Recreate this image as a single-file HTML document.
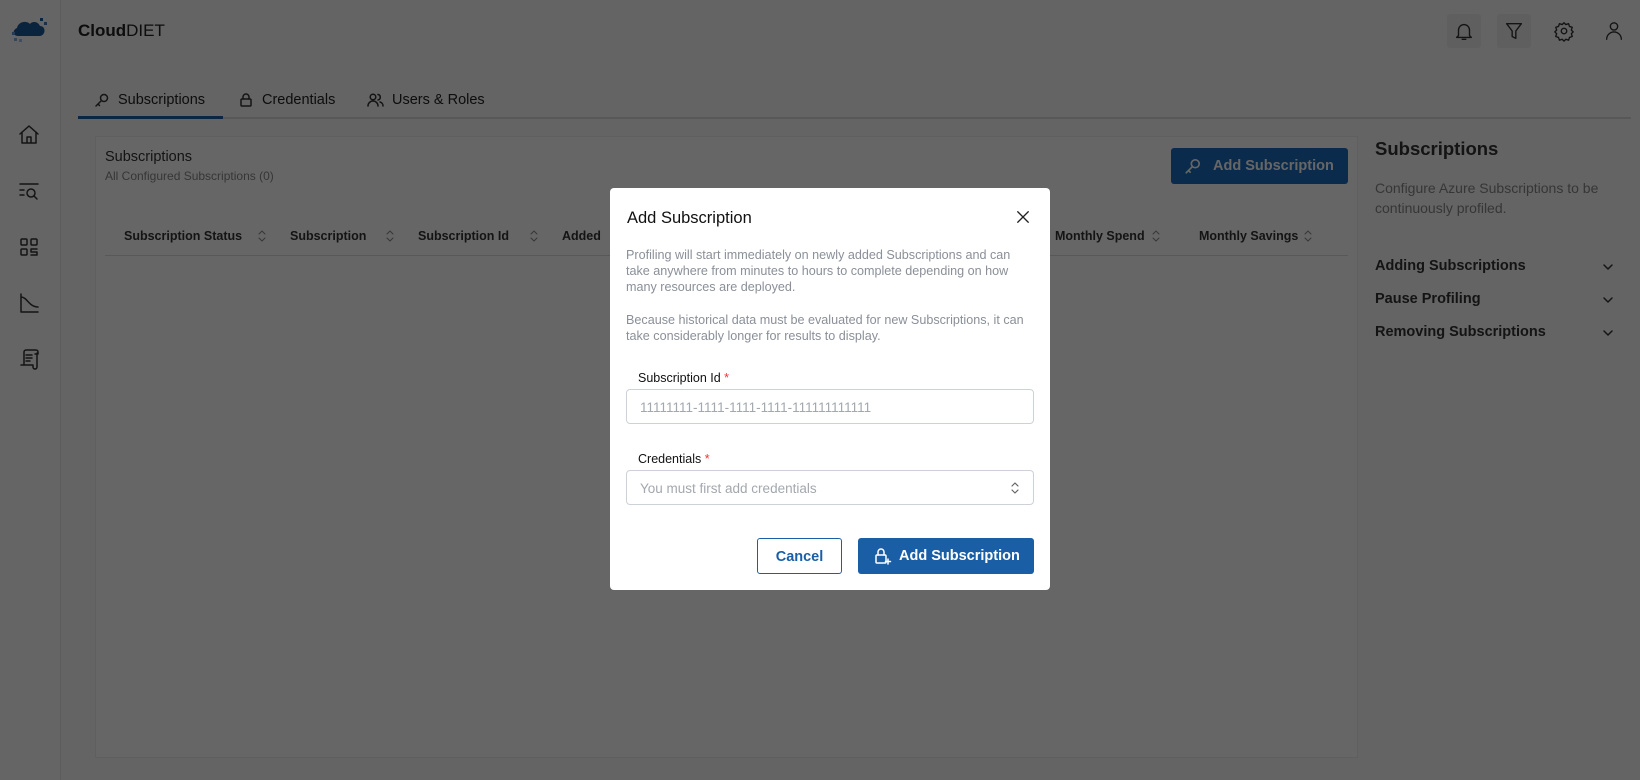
<!DOCTYPE html>
<html><head><meta charset="utf-8"><style>
*{box-sizing:border-box;margin:0;padding:0}
body{width:1640px;height:780px;overflow:hidden;font-family:"Liberation Sans",sans-serif;background:#f9f9f9;position:relative;color:#222}
.abs{position:absolute}
.sb{left:0;top:0;width:61px;height:780px;background:#fdfdfd;border-right:1px solid #e6e6e6}
.ic{position:absolute;left:17px;width:24px;height:24px}
svg{fill:none;stroke:#333;stroke-width:1.5;stroke-linecap:round;stroke-linejoin:round}
.th{top:229px;font-size:12.5px;font-weight:bold;color:#333}
.acc{left:1375px;font-size:14.5px;font-weight:bold;color:#333}
.ov{left:0;top:0;width:1640px;height:780px;background:rgba(0,0,0,.6)}
.m{left:610px;top:188px;width:440px;height:402px;background:#fff;border-radius:4px}
.p{font-size:12.6px;color:#8a8f98;line-height:16.2px;white-space:nowrap}
.lab{font-size:12.5px;color:#111}
.inp{left:16px;width:408px;height:35px;border:1px solid #cdd2d8;border-radius:4px;font-size:13.5px;color:#a3a8ae;padding:10px 13px}
.srt{position:absolute;top:230px}
</style></head><body>
<div class="abs sb"></div>
<svg class="abs" style="left:10px;top:14px;stroke:none" width="40" height="32" viewBox="0 0 40 32"><path d="M8 22c-5 0-6-6-1-8 1-6 9-8 13-4 2-3 8-3 10 2 6 0 6 9 0 10z" fill="#1d5a9a"/><rect x="30" y="4" width="3" height="3" fill="#1d5a9a"/><rect x="34" y="8" width="3" height="3" fill="#3a7bc0"/><rect x="4" y="24" width="3" height="3" fill="#7fb0e0"/><rect x="9" y="25" width="3" height="3" fill="#a0c6ea"/><rect x="2" y="18" width="3" height="3" fill="#5a96d0"/></svg>
<div class="abs" style="left:78px;top:21px;font-size:17px"><b>Cloud</b>DIET</div>
<svg class="ic" style="top:123px" viewBox="0 0 24 24"><path d="M3 11l9-8 9 8M5 9v11h14V9M10 20v-6h4v6"/></svg>
<svg class="ic" style="top:179px" viewBox="0 0 24 24"><path d="M3 5h18M3 11h4M3 16h4"/><circle cx="14" cy="14" r="4"/><path d="M17 17l3 3"/></svg>
<svg class="ic" style="top:235px" viewBox="0 0 24 24"><rect x="4" y="4" width="6" height="6" rx="1"/><rect x="14" y="4" width="6" height="6" rx="1"/><rect x="4" y="14" width="6" height="6" rx="1"/><path d="M14 14h6M14 14v3h6v3h-6"/></svg>
<svg class="ic" style="top:291px" viewBox="0 0 24 24"><path d="M4 3v18h17M4 6c6 0 8 10 17 10"/></svg>
<svg class="ic" style="top:347px" viewBox="0 0 24 24"><path d="M7 18V5a2 2 0 012-2h10a2 2 0 012 2v2h-3M9 8h6M9 11h6M9 14h4M4 18h12v2a2 2 0 004 0V6"/></svg>
<div class="abs" style="left:1447px;top:14px;width:34px;height:34px;background:#eee;border-radius:3px"></div>
<div class="abs" style="left:1497px;top:14px;width:34px;height:34px;background:#eee;border-radius:3px"></div>
<svg class="abs" style="left:1453px;top:20px" width="22" height="22" viewBox="0 0 24 24"><path d="M6 17V11a6 6 0 0112 0v6l2 2H4zM10 21h4"/></svg>
<svg class="abs" style="left:1503px;top:20px" width="22" height="22" viewBox="0 0 24 24"><path d="M4 4h16l-6 8v8l-4-2v-6z"/></svg>
<svg class="abs" style="left:1553px;top:20px" width="22" height="22" viewBox="0 0 24 24"><circle cx="12" cy="12" r="3"/><path d="M12 3l2 2 3-1 1 3 3 1-1 3 2 2-2 2 1 3-3 1-1 3-3-1-2 2-2-2-3 1-1-3-3-1 1-3-2-2 2-2-1-3 3-1 1-3 3 1z"/></svg>
<svg class="abs" style="left:1603px;top:20px" width="22" height="22" viewBox="0 0 24 24"><circle cx="12" cy="7" r="4"/><path d="M4 21a8 8 0 0116 0"/></svg>
<div class="abs" style="left:78px;top:117px;width:1553px;height:2px;background:#ddd"></div>
<div class="abs" style="left:78px;top:116px;width:145px;height:3px;background:#1d5fa6"></div>
<svg class="abs" style="left:94px;top:92px" width="16" height="16" viewBox="0 0 16 16"><circle cx="10" cy="6" r="3.5"/><path d="M7.5 8.5L2 14M4 12l1.5 1.5"/></svg>
<div class="abs" style="left:118px;top:92px;font-size:14.5px;color:#222">Subscriptions</div>
<svg class="abs" style="left:239px;top:92px" width="14" height="16" viewBox="0 0 14 16"><rect x="2" y="7" width="10" height="7" rx="1"/><path d="M4 7V5a3 3 0 016 0v2"/></svg>
<div class="abs" style="left:262px;top:92px;font-size:14.5px;color:#222">Credentials</div>
<svg class="abs" style="left:367px;top:92px" width="17" height="16" viewBox="0 0 17 16"><circle cx="6" cy="5" r="2.8"/><path d="M1 14a5 5 0 0110 0M11 2.5a2.8 2.8 0 010 5.5M13 10a4 4 0 013 4"/></svg>
<div class="abs" style="left:392px;top:92px;font-size:14.5px;color:#222">Users &amp; Roles</div>
<div class="abs" style="left:95px;top:136px;width:1263px;height:622px;background:#fff;border:1px solid #eee"></div>
<div class="abs" style="left:105px;top:149px;font-size:14.5px;color:#333">Subscriptions</div>
<div class="abs" style="left:105px;top:169px;font-size:12px;color:#888">All Configured Subscriptions (0)</div>
<div class="abs" style="left:1171px;top:148px;width:177px;height:36px;background:#1b6bbd;border-radius:3px;color:#fff;font-size:14.5px;font-weight:bold;padding:10px 0 0 42px">Add Subscription</div>
<svg class="abs" style="left:1184px;top:157px;stroke:#fff" width="18" height="18" viewBox="0 0 16 16"><circle cx="10" cy="6" r="3.5"/><path d="M7.5 8.5L2 14M4 12l1.5 1.5"/></svg>
<div class="abs th" style="left:124px">Subscription Status</div>
<div class="abs th" style="left:290px">Subscription</div>
<div class="abs th" style="left:418px">Subscription Id</div>
<div class="abs th" style="left:562px">Added</div>
<div class="abs th" style="left:1055px">Monthly Spend</div>
<div class="abs th" style="left:1199px">Monthly Savings</div>
<svg class="srt" style="left:258px" width="8" height="12" viewBox="0 0 8 12"><path d="M1 4l3-3 3 3M1 8l3 3 3-3" stroke="#888" stroke-width="1"/></svg>
<svg class="srt" style="left:386px" width="8" height="12" viewBox="0 0 8 12"><path d="M1 4l3-3 3 3M1 8l3 3 3-3" stroke="#888" stroke-width="1"/></svg>
<svg class="srt" style="left:530px" width="8" height="12" viewBox="0 0 8 12"><path d="M1 4l3-3 3 3M1 8l3 3 3-3" stroke="#888" stroke-width="1"/></svg>
<svg class="srt" style="left:1152px" width="8" height="12" viewBox="0 0 8 12"><path d="M1 4l3-3 3 3M1 8l3 3 3-3" stroke="#888" stroke-width="1"/></svg>
<svg class="srt" style="left:1304px" width="8" height="12" viewBox="0 0 8 12"><path d="M1 4l3-3 3 3M1 8l3 3 3-3" stroke="#888" stroke-width="1"/></svg>
<div class="abs" style="left:105px;top:255px;width:1243px;height:1px;background:#ddd"></div>
<div class="abs" style="left:1357px;top:136px;width:1px;height:622px;background:#eee"></div>
<div class="abs" style="left:1375px;top:138px;font-size:18.5px;font-weight:bold;color:#333">Subscriptions</div>
<div class="abs" style="left:1375px;top:178px;font-size:14px;color:#888;line-height:20px;width:230px">Configure Azure Subscriptions to be continuously profiled.</div>
<div class="abs acc" style="top:258px">Adding Subscriptions</div>
<div class="abs acc" style="top:291px">Pause Profiling</div>
<div class="abs acc" style="top:324px">Removing Subscriptions</div>
<svg class="abs" style="left:1602px;top:263px" width="12" height="8" viewBox="0 0 12 8"><path d="M2 2l4 4 4-4"/></svg>
<svg class="abs" style="left:1602px;top:296px" width="12" height="8" viewBox="0 0 12 8"><path d="M2 2l4 4 4-4"/></svg>
<svg class="abs" style="left:1602px;top:329px" width="12" height="8" viewBox="0 0 12 8"><path d="M2 2l4 4 4-4"/></svg>
<div class="abs ov"></div>
<div class="abs m">
<div class="abs" style="left:17px;top:21px;font-size:16.5px;color:#111">Add Subscription</div>
<svg class="abs" style="left:406px;top:22px;stroke:#222" width="14" height="14" viewBox="0 0 16 16"><path d="M2 2l12 12M14 2L2 14"/></svg>
<div class="abs p" style="left:16px;top:59px">Profiling will start immediately on newly added Subscriptions and can<br>take anywhere from minutes to hours to complete depending on how<br>many resources are deployed.<br><br>Because historical data must be evaluated for new Subscriptions, it can<br>take considerably longer for results to display.</div>
<div class="abs lab" style="left:28px;top:183px">Subscription Id <span style="color:#e33">*</span></div>
<div class="abs inp" style="top:201px">11111111-1111-1111-1111-111111111111</div>
<div class="abs lab" style="left:28px;top:264px">Credentials <span style="color:#e33">*</span></div>
<div class="abs inp" style="top:282px">You must first add credentials</div>
<svg class="abs" style="left:400px;top:293px" width="10" height="14" viewBox="0 0 10 14"><path d="M2 5l3-3 3 3M2 9l3 3 3-3" stroke="#666" stroke-width="1.2"/></svg>
<div class="abs" style="left:147px;top:350px;width:85px;height:36px;border:1px solid #1a5fa6;border-radius:3px;color:#1a5fa6;font-size:14.5px;font-weight:bold;text-align:center;padding-top:10px">Cancel</div>
<div class="abs" style="left:248px;top:350px;width:176px;height:36px;background:#1a5fa6;border-radius:3px;color:#fff;font-size:14.5px;font-weight:bold;padding:10px 0 0 41px">Add Subscription</div>
<svg class="abs" style="left:264px;top:359px;stroke:#fff" width="18" height="18" viewBox="0 0 18 18"><rect x="2" y="8" width="10" height="8" rx="1"/><path d="M4 8V5a3 3 0 016 0v3M14 12v5M11.5 14.5h5"/></svg>
</div>
</body></html>
